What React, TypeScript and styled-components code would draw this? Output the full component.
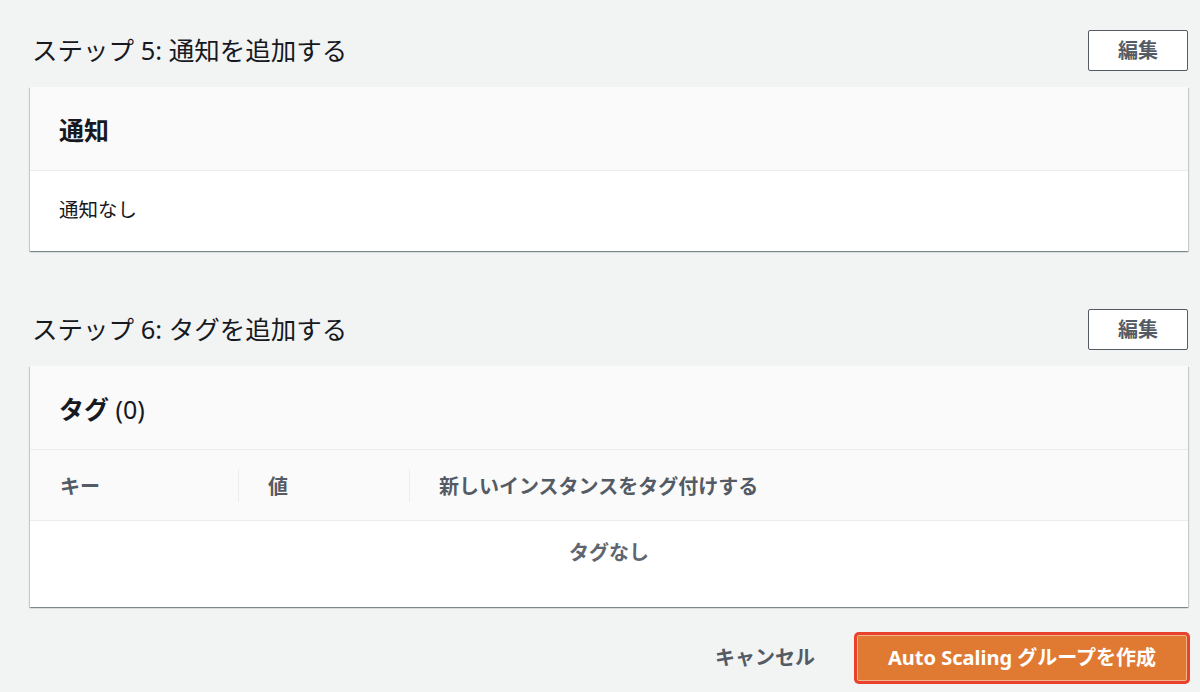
import * as React from 'react';
import styled, { createGlobalStyle } from 'styled-components';

const GlobalStyle = createGlobalStyle`
  html, body {
    margin: 0;
    padding: 0;
    background: #f2f3f3;
    font-family: "Noto Sans", "Noto Sans CJK JP", sans-serif;
    color: #16191f;
  }
`;

const Page = styled.div`
  padding: 30px 12px 20px 30px;
`;

const Section = styled.section<{ gap?: number }>`
  margin-bottom: ${p => p.gap ?? 0}px;
`;

const SectionHeader = styled.div`
  display: flex;
  align-items: center;
  justify-content: space-between;
  height: 41px;
  margin-bottom: 16px;
`;

const Heading = styled.h2`
  margin: 0 0 0 2px;
  font-size: 25.5px;
  font-weight: 400;
  line-height: 1;
  color: #16191f;
`;

const EditButton = styled.button`
  width: 100px;
  height: 41px;
  padding: 0;
  background: #fff;
  border: 1px solid #545b64;
  border-radius: 2px;
  font-family: inherit;
  font-size: 20px;
  font-weight: 700;
  line-height: 1;
  color: #545b64;
  cursor: pointer;
`;

const Panel = styled.div`
  background: #fff;
  box-shadow: 0 1px 1px 0 rgba(0, 28, 36, 0.3), 1px 1px 1px 0 rgba(0, 28, 36, 0.15),
    -1px 1px 1px 0 rgba(0, 28, 36, 0.15);
`;

const PanelHeader = styled.div`
  height: 84px;
  display: flex;
  align-items: center;
  padding-left: 29px;
  background: #fafafa;
  border-bottom: 1px solid #eaeded;
  box-sizing: border-box;
`;

const PanelTitle = styled.h3`
  margin: 0;
  font-size: 25px;
  font-weight: 700;
  color: #16191f;
`;

const Count = styled.span`
  font-weight: 400;
`;

const PanelBody = styled.div`
  height: 80px;
  display: flex;
  align-items: center;
  padding: 0 0 6px 29px;
  box-sizing: border-box;
  font-size: 19.5px;
`;

const Table = styled.div`
  display: flex;
  flex-direction: column;
`;

const HeadRow = styled.div`
  display: grid;
  grid-template-columns: 208px 171px 1fr;
  height: 71px;
  background: #fafafa;
  border-bottom: 1px solid #eaeded;
  box-sizing: border-box;
`;

const HeadCell = styled.div<{ divider?: boolean }>`
  display: flex;
  align-items: center;
  padding-left: 30px;
  font-size: 20px;
  font-weight: 700;
  color: #545b64;
  position: relative;
  &::before {
    content: '';
    display: ${p => (p.divider ? 'block' : 'none')};
    position: absolute;
    left: 0;
    top: 19px;
    bottom: 18px;
    width: 1px;
    background: #eaeded;
  }
`;

const Empty = styled.div`
  height: 86px;
  display: flex;
  justify-content: center;
  padding-top: 16px;
  box-sizing: border-box;
  font-size: 20px;
  font-weight: 700;
  color: #5f6670;
`;

const Footer = styled.div`
  display: flex;
  justify-content: flex-end;
  align-items: center;
  gap: 42px;
  height: 46px;
  margin-top: 28px;
  padding-right: 1px;
`;

const LinkButton = styled.button`
  background: none;
  border: none;
  padding: 0;
  font-family: inherit;
  font-size: 20px;
  font-weight: 700;
  line-height: 1;
  color: #545b64;
  cursor: pointer;
`;

const PrimaryButton = styled.button`
  box-sizing: border-box;
  width: 330px;
  height: 46px;
  padding: 0;
  background: #e07a33;
  border: 1px solid #f2b48a;
  border-radius: 2px;
  box-shadow: 0 0 0 3px #e8412c;
  font-family: inherit;
  font-size: 20px;
  font-weight: 700;
  line-height: 1;
  white-space: nowrap;
  color: #fff;
  cursor: pointer;
`;

const App = () => (
  <Page>
    <GlobalStyle />
    <Section gap={58}>
      <SectionHeader>
        <Heading>ステップ 5: 通知を追加する</Heading>
        <EditButton>編集</EditButton>
      </SectionHeader>
      <Panel>
        <PanelHeader>
          <PanelTitle>通知</PanelTitle>
        </PanelHeader>
        <PanelBody>通知なし</PanelBody>
      </Panel>
    </Section>
    <Section>
      <SectionHeader>
        <Heading>ステップ 6: タグを追加する</Heading>
        <EditButton>編集</EditButton>
      </SectionHeader>
      <Panel>
        <PanelHeader>
          <PanelTitle>
            タグ <Count>(0)</Count>
          </PanelTitle>
        </PanelHeader>
        <Table>
          <HeadRow>
            <HeadCell>キー</HeadCell>
            <HeadCell divider>値</HeadCell>
            <HeadCell divider>新しいインスタンスをタグ付けする</HeadCell>
          </HeadRow>
          <Empty>タグなし</Empty>
        </Table>
      </Panel>
    </Section>
    <Footer>
      <LinkButton>キャンセル</LinkButton>
      <PrimaryButton>Auto Scaling グループを作成</PrimaryButton>
    </Footer>
  </Page>
);

export default App;
